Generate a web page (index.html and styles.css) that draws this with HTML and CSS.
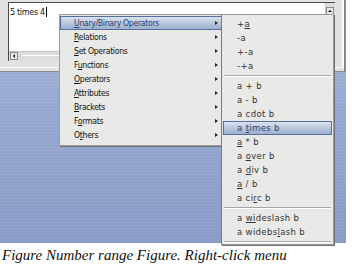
FILE: index.html
```html
<!DOCTYPE html>
<html>
<head>
<meta charset="UTF-8">
<title>Right-click menu</title>
<link rel="stylesheet" href="styles.css">
</head>
<body>
<div class="screen">
	<div class="window">
		<div class="editor">
			<div class="editor-body">
				<div class="text-area">5 times 4<span class="caret"></span></div>
				<div class="vscroll"><span class="btn"><span class="arrow-up"></span></span></div>
			</div>
			<div class="hscroll"><span class="btn"><span class="arrow-left"></span></span><span class="track"></span></div>
		</div>
	</div>

	<!-- context menu -->
	<ul class="menu main-menu">
		<li class="active"><span><u>U</u>nary/Binary Operators</span><i class="arrow"></i></li>
		<li><span><u>R</u>elations</span><i class="arrow"></i></li>
		<li><span><u>S</u>et Operations</span><i class="arrow"></i></li>
		<li><span>F<u>u</u>nctions</span><i class="arrow"></i></li>
		<li><span><u>O</u>perators</span><i class="arrow"></i></li>
		<li><span><u>A</u>ttributes</span><i class="arrow"></i></li>
		<li><span><u>B</u>rackets</span><i class="arrow"></i></li>
		<li><span>F<u>o</u>rmats</span><i class="arrow"></i></li>
		<li><span>O<u>t</u>hers</span><i class="arrow"></i></li>
	</ul>

	<ul class="menu sub-menu">
		<li><span>+<u>a</u></span></li>
		<li><span>-a</span></li>
		<li><span>+-a</span></li>
		<li><span>-+a</span></li>
		<li class="sep"></li>
		<li><span>a + b</span></li>
		<li><span>a - b</span></li>
		<li><span>a cdot b</span></li>
		<li class="active"><span>a <u>t</u>imes b</span></li>
		<li><span><u>a</u> * b</span></li>
		<li><span>a <u>o</u>ver b</span></li>
		<li><span>a <u>d</u>iv b</span></li>
		<li><span><u>a</u> / b</span></li>
		<li><span>a ci<u>r</u>c b</span></li>
		<li class="sep"></li>
		<li><span>a <u>wi</u>deslash b</span></li>
		<li><span>a widebs<u>l</u>ash b</span></li>
		<li class="sep last"></li>
	</ul>
</div>
<p class="caption">Figure Number range Figure. Right-click menu</p>
</body>
</html>
```

FILE: styles.css
```css
html, body{
	margin:0;
	padding:0;
	background:#fff;
}
body{
	width:352px;
	height:264px;
	overflow:hidden;
}
.screen{
	position:relative;
	width:346px;
	height:243px;
	background:
		repeating-linear-gradient(180deg, rgba(255,255,255,0.06) 0, rgba(255,255,255,0.06) 1px, transparent 1px, transparent 3px),
		linear-gradient(180deg, #a9b9da 0, #97a9d0 40%, #889bc6 100%);
}

/* window frame */
.window{
	box-sizing:border-box;
	height:72px;
	padding:2px 9px 0 8px;
	background:#e2e2e2;
	border-right:2px solid #8a8a8a;
	border-bottom:1px solid #8a8a8a;
	box-shadow:inset 0 -3px 0 #e2e2e2, inset 0 -4px 0 #fff, inset -2px 0 0 #fff;
}
.editor{
	height:59px;
	display:flex;
	flex-direction:column;
	background:#fff;
	border-left:1px solid #4a4a4a;
	border-top:1px solid #4a4a4a;
	box-sizing:border-box;
}
.editor-body{
	flex:1;
	display:flex;
}
.text-area{
	flex:1;
	padding:4px 0 0 1px;
	font-family:"DejaVu Sans", sans-serif;
	font-size:8px;
	letter-spacing:-0.3px;
	color:#111;
}
.caret{
	display:inline-block;
	width:1px;
	height:10px;
	background:#000;
	vertical-align:-2px;
	margin-left:1px;
}
.vscroll{
	width:9px;
	background:#dcdcdc;
	border-left:1px solid #c4c4c4;
	padding-top:4px;
}
.hscroll{
	height:9px;
	display:flex;
	background:#dcdcdc;
	border-top:1px solid #c4c4c4;
}
.btn{
	display:flex;
	align-items:center;
	justify-content:center;
	width:8px;
	height:8px;
	background:#e8e8e8;
	border:1px solid #8c8c8c;
	box-sizing:border-box;
}
.hscroll .btn{
	margin-left:1px;
}
.hscroll .track{
	flex:1;
	margin:3px 0 0 4px;
	height:1px;
	background:#fff;
}
.arrow-up{
	border-left:2px solid transparent;
	border-right:2px solid transparent;
	border-bottom:2px solid #111;
}
.arrow-left{
	border-top:2px solid transparent;
	border-bottom:2px solid transparent;
	border-right:2px solid #111;
}

/* menus */
.menu{
	position:absolute;
	margin:0;
	list-style:none;
	background:#e9e9e7;
	border:1px solid #9c9c9c;
	box-shadow:1px 1px 0 #6e6e6e;
}
.menu li{
	box-sizing:border-box;
	height:14px;
	display:flex;
	align-items:center;
	border:1px solid transparent;
	white-space:pre;
}
.menu u{
	text-decoration-thickness:1px;
	text-underline-offset:1px;
}
.main-menu{
	left:59px;
	top:14px;
	width:163px;
	padding:1px 0 3px;
	font-family:"DejaVu Sans Condensed", "DejaVu Sans", sans-serif;
	font-size:8.6px;
	color:#111;
	letter-spacing:-0.3px;
}
.main-menu li{
	justify-content:space-between;
	padding:0 4px 0 13px;
}
.arrow{
	display:block;
	border-top:2px solid transparent;
	border-bottom:2px solid transparent;
	border-left:3px solid #222;
}
.menu li.active{
	background:linear-gradient(180deg, #dbe3ef 0, #b9c7dd 50%, #9cb0cf 100%);
	border-color:#566e9c;
	color:#2a3f72;
}
.sub-menu{
	left:221px;
	top:14px;
	width:111px;
	padding:2px 0 0;
	font-family:"DejaVu Sans", sans-serif;
	font-size:8.5px;
	letter-spacing:0.35px;
	color:#333;
	border-left-color:#7a7a7a;
}
.sub-menu li{
	padding:0 0 0 14px;
}
.sub-menu li.active{
	margin:0 1px;
	padding-left:13px;
}
.sub-menu li.sep{
	height:6px;
	padding:0;
	margin:0 2px;
	border:0;
	background:linear-gradient(180deg, transparent 2px, #a6a6a6 2px, #a6a6a6 3px, #fff 3px, #fff 4px, transparent 4px);
}
.sub-menu li.last{
	height:5px;
}

.caption{
	margin:4px 0 0 2px;
	font-family:"Liberation Serif", serif;
	font-style:italic;
	font-size:15px;
	line-height:17px;
	color:#111;
}
```
